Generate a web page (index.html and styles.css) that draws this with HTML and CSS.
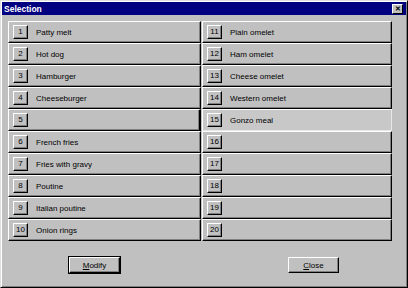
FILE: index.html
```html
<!DOCTYPE html>
<html lang="en">
<head>
  <meta charset="UTF-8">
  <title>Selection</title>
  <link rel="stylesheet" href="styles.css">
</head>
<body>
  <div class="window">
    <div class="titlebar">
      <span class="title">Selection</span>
      <span class="close">&#x2715;</span>
    </div>
    <div class="content">
      <div class="grid">
        <div class="item"><span class="num">1</span><span class="label">Patty melt</span></div>
        <div class="item"><span class="num">11</span><span class="label">Plain omelet</span></div>
        <div class="item"><span class="num">2</span><span class="label">Hot dog</span></div>
        <div class="item"><span class="num">12</span><span class="label">Ham omelet</span></div>
        <div class="item"><span class="num">3</span><span class="label">Hamburger</span></div>
        <div class="item"><span class="num">13</span><span class="label">Cheese omelet</span></div>
        <div class="item"><span class="num">4</span><span class="label">Cheeseburger</span></div>
        <div class="item"><span class="num">14</span><span class="label">Western omelet</span></div>
        <div class="item item-edge"><span class="num">5</span><span class="label"></span></div>
        <div class="item item-focus"><span class="num">15</span><span class="label">Gonzo meal</span></div>
        <div class="item"><span class="num">6</span><span class="label">French fries</span></div>
        <div class="item"><span class="num">16</span><span class="label"></span></div>
        <div class="item"><span class="num">7</span><span class="label">Fries with gravy</span></div>
        <div class="item"><span class="num">17</span><span class="label"></span></div>
        <div class="item"><span class="num">8</span><span class="label">Poutine</span></div>
        <div class="item"><span class="num">18</span><span class="label"></span></div>
        <div class="item"><span class="num">9</span><span class="label">Italian poutine</span></div>
        <div class="item"><span class="num">19</span><span class="label"></span></div>
        <div class="item"><span class="num">10</span><span class="label">Onion rings</span></div>
        <div class="item"><span class="num">20</span><span class="label"></span></div>
      </div>
      <div class="footer">
        <button class="btn btn-default"><u>M</u>odify</button>
        <button class="btn"><u>C</u>lose</button>
      </div>
    </div>
  </div>
</body>
</html>
```

FILE: styles.css
```css
html, body {
  margin: 0;
  padding: 0;
}

body {
  width: 408px;
  height: 288px;
  font-family: 'Liberation Sans', Arial, sans-serif;
  font-size: 8px;
  color: #000;
  background: #c0c0c0;
}

.window {
  box-sizing: border-box;
  width: 408px;
  height: 288px;
  background: #c0c0c0;
  border-top: 1px solid #dfdfdf;
  border-left: 1px solid #dfdfdf;
  border-right: 1px solid #000;
  border-bottom: 1px solid #000;
  box-shadow: inset 1px 1px 0 #fff, inset -1px -1px 0 #808080;
  padding: 1px;
}

.titlebar {
  height: 13px;
  background: #000080;
  display: flex;
  align-items: center;
  justify-content: space-between;
  padding: 0 3px 0 2px;
}

.title {
  color: #fff;
  font-weight: bold;
  font-size: 8.5px;
}

.close {
  box-sizing: border-box;
  width: 11px;
  height: 10px;
  background: #c0c0c0;
  border-top: 1px solid #fff;
  border-left: 1px solid #fff;
  border-right: 1px solid #000;
  border-bottom: 1px solid #000;
  font-size: 7px;
  font-weight: bold;
  line-height: 8px;
  text-align: center;
}

.content {
  padding: 6px 14px 0 6px;
}

.grid {
  display: grid;
  grid-template-columns: 193px 190px;
  column-gap: 1px;
  grid-auto-rows: 22px;
}

.item {
  box-sizing: border-box;
  display: flex;
  align-items: center;
  gap: 8px;
  padding-left: 4px;
  background: #c0c0c0;
  border-top: 1px solid #fff;
  border-left: 1px solid #fff;
  border-right: 1px solid #000;
  border-bottom: 1px solid #000;
  box-shadow: inset -1px -1px 0 #808080;
}

.item-edge {
  border-right: 2px solid #000;
}

.item-focus {
  border-right: 1px solid #e8e8e8;
  border-bottom: 1px solid #e8e8e8;
  box-shadow: none;
  background: #c8c8c8;
}

.num {
  box-sizing: border-box;
  width: 15px;
  height: 14px;
  font-size: 8px;
  line-height: 12px;
  text-align: center;
  border-top: 1px solid #fff;
  border-left: 1px solid #fff;
  border-right: 1px solid #000;
  border-bottom: 1px solid #000;
  box-shadow: inset -1px -1px 0 #808080;
}

.label {
  font-size: 8px;
}

.footer {
  display: flex;
  padding-top: 16px;
}

.btn {
  box-sizing: border-box;
  width: 51px;
  height: 16px;
  padding: 0;
  font-family: 'Liberation Sans', Arial, sans-serif;
  font-size: 8px;
  background: #c0c0c0;
  color: #000;
  border-top: 1px solid #fff;
  border-left: 1px solid #fff;
  border-right: 1px solid #000;
  border-bottom: 1px solid #000;
  box-shadow: inset -1px -1px 0 #808080;
}

.btn-default {
  margin-left: 61px;
  outline: 1px solid #000;
}

.btn + .btn {
  margin-left: 168px;
}
```
